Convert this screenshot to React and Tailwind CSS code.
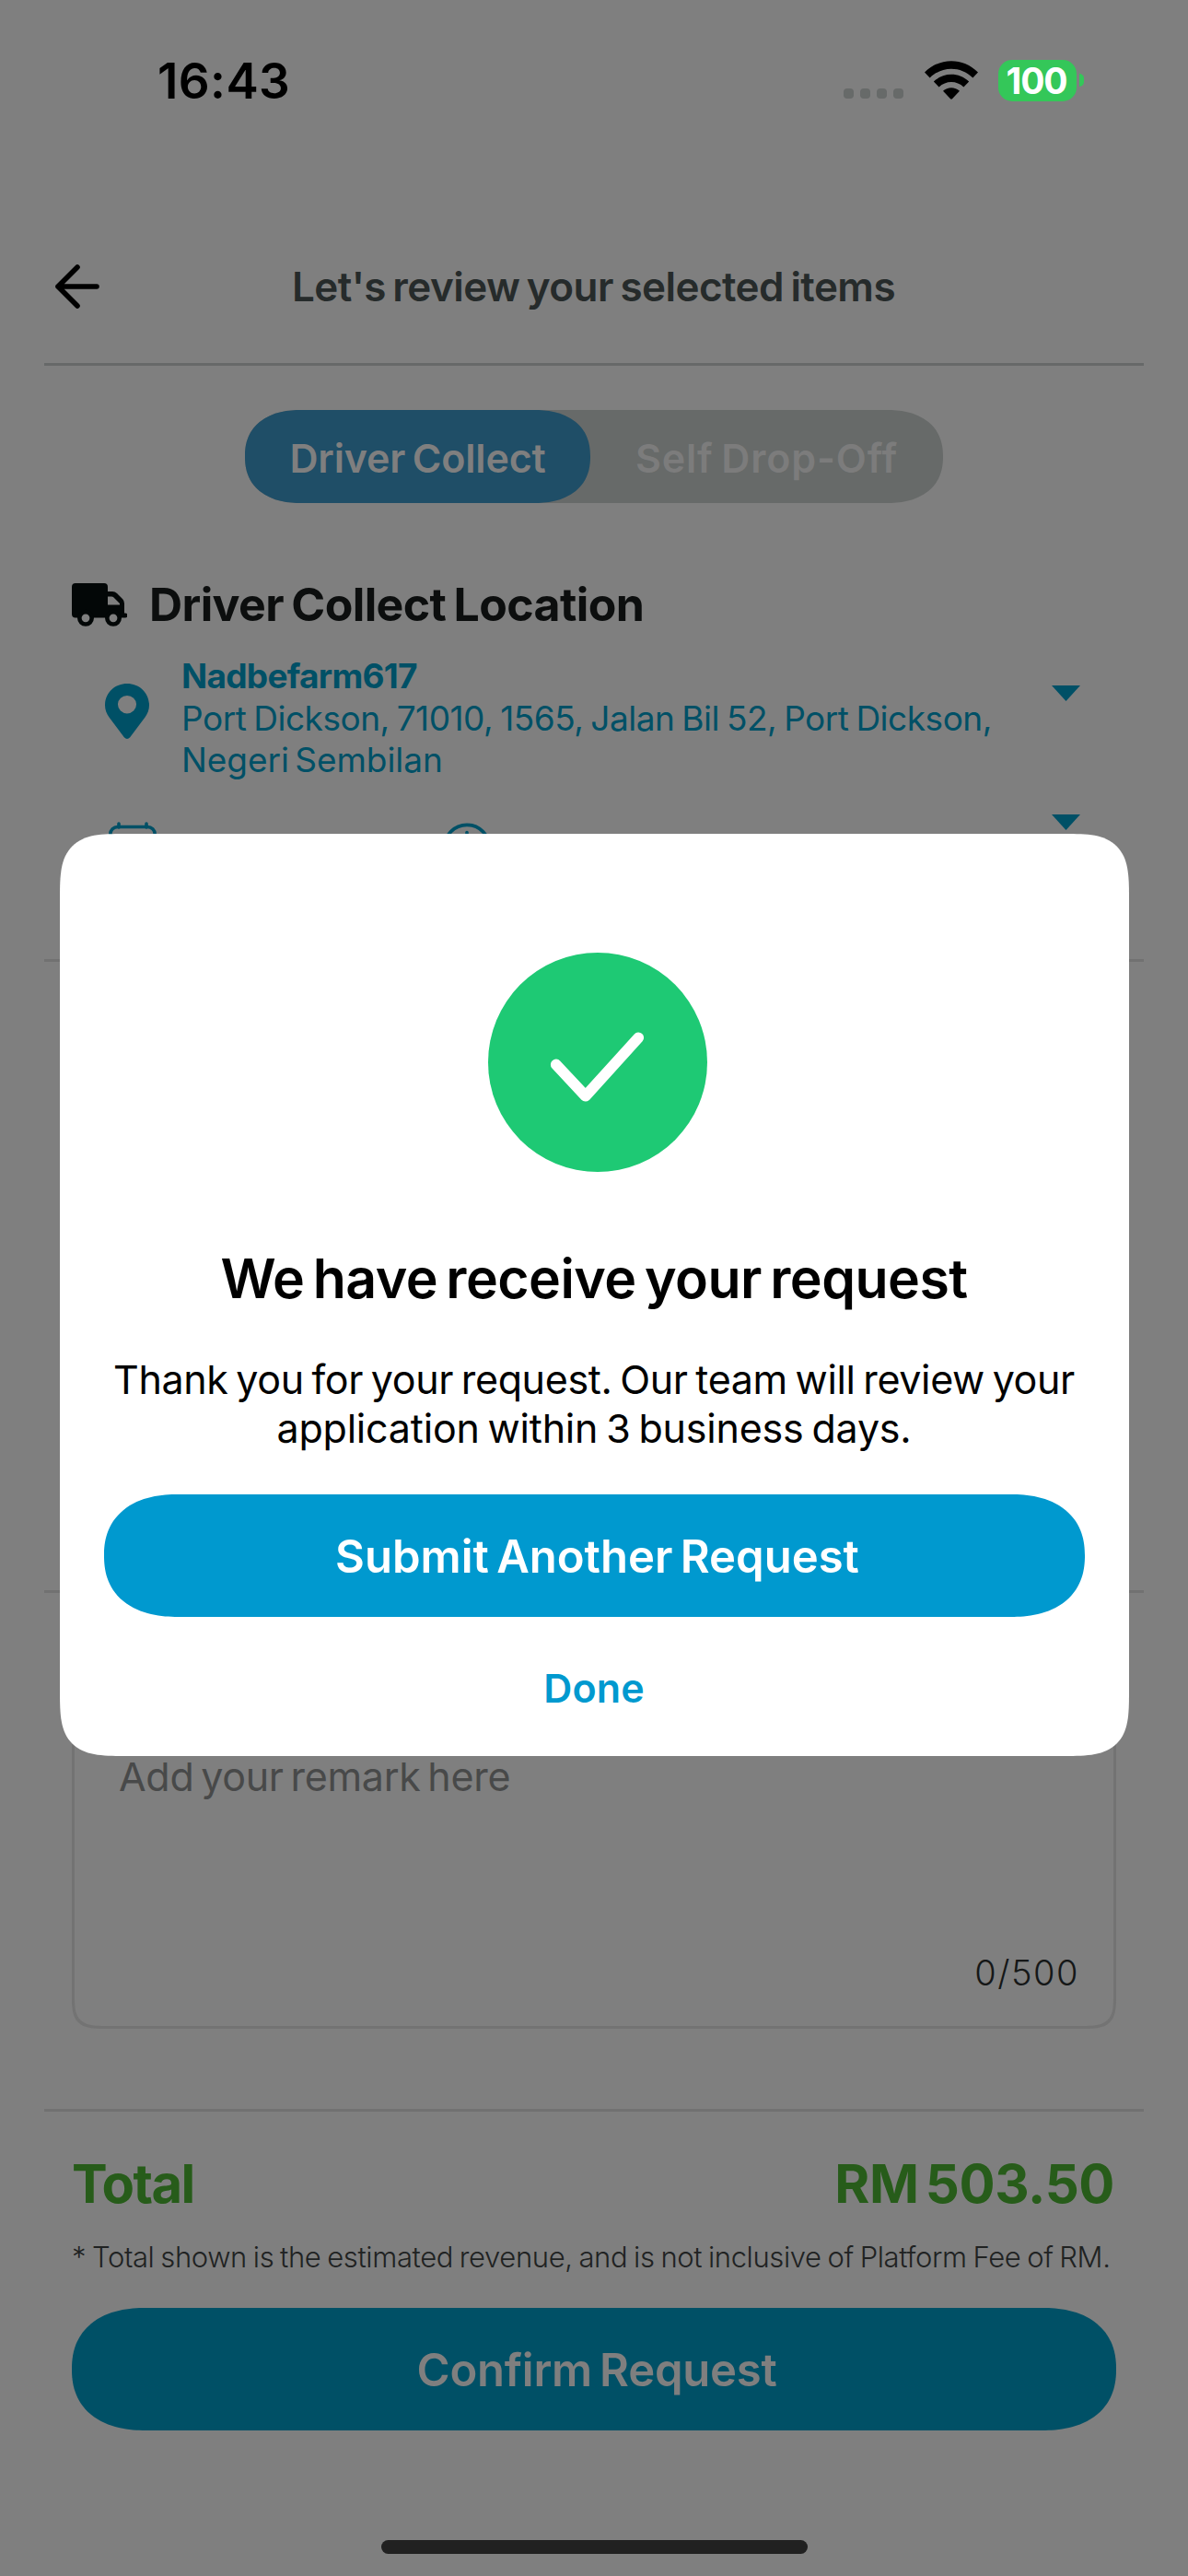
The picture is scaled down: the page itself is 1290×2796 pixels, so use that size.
import React from "react";

function StatusBar() {
  return (
    <div className="flex h-[174px] items-center justify-between pl-[171px] pr-[113px]">
      <span className="pt-[2px] text-[53px] font-semibold leading-none tracking-[0.4px] text-black">16:43</span>
      <div className="flex items-center">
        <div className="mt-[29px] flex gap-[7px]">
          {[0, 1, 2, 3].map((i) => (
            <span key={i} className="size-[11px] rounded-[4px] bg-[#676a69]" />
          ))}
        </div>
        <svg className="ml-[23px] h-[43px] w-[58px]" viewBox="0 0 58 43" fill="black">
          <path d="M0 12.5 C16 -4 42 -4 58 12.5 L52.3 18.4 C39.2 5.4 18.8 5.4 5.7 18.4 Z" />
          <path d="M9.8 22.6 C20.5 12 37.5 12 48.2 22.6 L42.4 28.5 C35 21.1 23 21.1 15.6 28.5 Z" />
          <path d="M20 32.8 C25 27.9 33 27.9 38 32.8 L30.2 41 C29.4 42 28.6 42 27.8 41 Z" />
        </svg>
        <div className="ml-[22px] flex h-[45px] w-[85px] items-center justify-center rounded-[15px] bg-[#34c759]">
          <span className="pr-[2px] text-[39px] font-bold leading-none tracking-[-1.2px] text-white">100</span>
        </div>
        <span className="ml-[3px] h-[14px] w-[5px] rounded-r-full bg-[#34c759]" />
      </div>
    </div>
  );
}

function Header() {
  return (
    <header className="flex h-[220px] items-center pl-[59px] pr-[58px] pt-[54px]">
      <svg className="h-[50px] w-[50px]" viewBox="0 0 50 50" fill="none" stroke="black" strokeWidth="5.6" strokeLinecap="round" strokeLinejoin="round">
        <path d="M25 4 L4 25 L25 46 M4 25 H46" />
      </svg>
      <h1 className="mr-[52px] flex-1 text-center text-[44px] font-semibold leading-[56px] tracking-[-0.56px] text-[#262b2b] [word-spacing:-3px]">
        Let's review your selected items
      </h1>
    </header>
  );
}

function Toggle() {
  return (
    <div className="ml-[266px] mt-12 flex h-[101px] w-[758px] rounded-[61px/50px] bg-[#676a69] [corner-shape:superellipse(1.2)]">
      <button className="flex w-[375px] items-center justify-center rounded-[61px/50px] bg-[#1f4e67] pt-[3px] text-[43px] font-semibold tracking-[-0.18px] text-[#7f7f7f] [corner-shape:superellipse(1.2)] [word-spacing:-3px]">
        Driver Collect
      </button>
      <button className="flex flex-1 items-center justify-center pt-[3px] text-[43px] font-semibold tracking-[0.85px] text-[#7c7c7c] [word-spacing:-3px]">
        Self Drop-Off
      </button>
    </div>
  );
}

function TruckIcon() {
  return (
    <svg className="h-[47px] w-[60px]" viewBox="0 0 60 47" fill="#030707">
      <path
        fillRule="evenodd"
        d="M4 0 H35 Q39 0 39 4 V9 H44 Q47 9 49 11 L55 17 Q57 19 57 22 V32.500 H58 A2.2 2.2 0 0 1 58 37.500 H4 Q0 37.500 0 33.500 V4 Q0 0 4 0 Z M39 14.500 V23.500 H52 V22 L45.500 15.500 Q44.500 14.500 43 14.500 Z"
      />
      <circle cx="15" cy="37.800" r="6.700" fill="#7f7f7f" stroke="#030707" strokeWidth="4.600" />
      <circle cx="45" cy="37.800" r="6.700" fill="#7f7f7f" stroke="#030707" strokeWidth="4.600" />
    </svg>
  );
}

function PinIcon() {
  return (
    <svg className="h-[60px] w-[48px]" viewBox="0 0 48 60" fill="#005066">
      <path
        fillRule="evenodd"
        d="M24 0 C10.700 0 0 10 0 23.500 C0 28.500 1.800 32.500 4.500 36.500 L20.800 58.300 Q24 61.600 27.200 58.300 L43.500 36.500 C46.200 32.500 48 28.500 48 23.500 C48 10 37.300 0 24 0 Z M24 13 A10 9.700 0 1 1 24 32.400 A10 9.700 0 1 1 24 13 Z"
      />
    </svg>
  );
}

function Caret() {
  return (
    <svg className="h-[17px] w-[31px]" viewBox="0 0 31 17" fill="#005066">
      <path d="M0 0 H31 L15.500 17 Z" />
    </svg>
  );
}

function CollectLocation() {
  return (
    <section className="mt-[70px] h-[425px] text-[#005066]">
      <div className="flex h-20 items-center pl-[78px]">
        <TruckIcon />
        <h2 className="ml-[24px] text-[50px] font-bold leading-[80px] tracking-[-0.6px] text-[#0c0e0e] [word-spacing:-3px]">
          Driver Collect Location
        </h2>
      </div>
      <div className="mt-[15px] flex pl-[114px] pr-[117px]">
        <div className="pt-[31px]">
          <PinIcon />
        </div>
        <div className="ml-[35px] flex-1 text-[37px] leading-[45.5px]">
          <p className="font-bold tracking-[-0.72px]">Nadbefarm617</p>
          <p className="whitespace-nowrap tracking-[-0.48px] [word-spacing:-2px]">
            Port Dickson, 71010, 1565, Jalan Bil 52, Port Dickson,
          </p>
          <p className="tracking-[-0.05px] [word-spacing:-4px]">Negeri Sembilan</p>
        </div>
        <div className="pt-[33px]">
          <Caret />
        </div>
      </div>
      <div className="mt-[36px] flex items-start pl-[118px] pr-[117px]">
        <svg className="mt-2 h-[56px] w-[52px]" viewBox="0 0 52 56" fill="none" stroke="#005066" strokeWidth="3.600" strokeLinecap="round">
          <rect x="1.800" y="5.500" width="48.400" height="48" rx="8" />
          <path d="M11 2 V6 M41 2 V6 M2 20 H50" />
        </svg>
        <svg className="ml-[310px] mt-[9px] size-[54px]" viewBox="0 0 54 54" fill="none" stroke="#005066" strokeWidth="3.600" strokeLinecap="round">
          <circle cx="27" cy="27" r="24.600" />
          <path d="M27 10.500 V27 L36 34" />
        </svg>
        <div className="ml-auto">
          <Caret />
        </div>
      </div>
    </section>
  );
}

function RemarkBox() {
  return (
    <div className="mx-[78px] mt-[111px] flex h-[362px] flex-col justify-between rounded-[36px] border-[3px] border-[#737373] pb-[35px] pl-[48px] pr-[37px] pt-[55px] [corner-shape:superellipse(1.7)]">
      <p className="text-[43px] leading-[60px] tracking-[-0.3px] text-[#484949] [word-spacing:-4px]">Add your remark here</p>
      <p className="text-right text-[38px] font-light leading-[46px] tracking-[1.5px] text-[#151717]">0/500</p>
    </div>
  );
}

function Footer() {
  return (
    <footer className="px-[78px] pt-[42px]">
      <div className="flex h-[72px] items-center justify-between text-[58px] font-bold text-[#275c1a]">
        <span className="tracking-[-1.6px]">Total</span>
        <span className="mr-[2px] tracking-[-0.41px] [word-spacing:-6px]">RM 503.50</span>
      </div>
      <p className="mt-6 h-10 whitespace-nowrap text-[31px] font-light leading-10 tracking-[-0.38px] text-[#202222] [word-spacing:-1.5px]">
        * Total shown is the estimated revenue, and is not inclusive of Platform Fee of RM.
      </p>
      <button className="mt-[35px] flex h-[133px] w-full items-center justify-center rounded-[80px/66px] bg-[#005066] pl-[6px] pt-[2px] text-[49px] font-semibold tracking-[-0.24px] text-[#7f7f7f] [corner-shape:superellipse(1.2)] [word-spacing:-4px]">
        Confirm Request
      </button>
      <div className="mx-auto mt-[119px] h-[15px] w-[463px] rounded-full bg-[#212121]" />
    </footer>
  );
}

function SuccessDialog() {
  return (
    <div className="absolute inset-0 flex justify-center pt-[905px]">
      <div role="dialog" className="flex h-[1001px] w-[1161px] flex-col items-center rounded-[70px] bg-white px-12 pt-[129px] [corner-shape:superellipse(1.7)]">
        <svg className="ml-[7px] size-[238px]" viewBox="0 0 237 237">
          <circle cx="118.500" cy="118.500" r="118.500" fill="#1ec974" />
          <path d="M73.500 121 L105.300 155 L162.500 92" fill="none" stroke="white" strokeWidth="11.800" strokeLinecap="round" strokeLinejoin="round" />
        </svg>
        <h2 className="mt-[80px] whitespace-nowrap text-[59px] font-semibold leading-[72px] tracking-[-0.54px] text-black [word-spacing:-5px]">
          We have receive your request
        </h2>
        <p className="mt-[47px] whitespace-nowrap text-center text-[43px] leading-[53px] text-black">
          <span className="tracking-[-0.36px] [word-spacing:-3px]">Thank you for your request. Our team will review your</span>
          <br />
          <span className="tracking-[-0.2px] [word-spacing:-3px]">application within 3 business days.</span>
        </p>
        <button className="mt-[45px] flex h-[133px] w-full items-center justify-center rounded-[80px/66px] bg-[#0099cf] pl-[7px] pt-[3px] text-[49px] font-semibold text-white [corner-shape:superellipse(1.2)] [word-spacing:-4px]">
          Submit Another Request
        </button>
        <button className="mt-[47px] h-[60px] text-[43px] font-semibold leading-[60px] tracking-[0.15px] text-[#0099cf]">Done</button>
      </div>
    </div>
  );
}

export default function App() {
  return (
    <div className="relative h-[2796px] w-[1290px] overflow-hidden bg-[#7f7f7f] font-['Inter',sans-serif]">
      <StatusBar />
      <Header />
      <div className="mx-12 h-[3px] bg-[#676969]" />
      <Toggle />
      <CollectLocation />
      <div className="mx-12 h-[3px] bg-[#717171]" />
      <div className="h-[682px]" />
      <div className="mx-12 h-[3px] bg-[#717171]" />
      <RemarkBox />
      <div className="mx-12 mt-[87px] h-[3px] bg-[#717171]" />
      <Footer />
      <SuccessDialog />
    </div>
  );
}
